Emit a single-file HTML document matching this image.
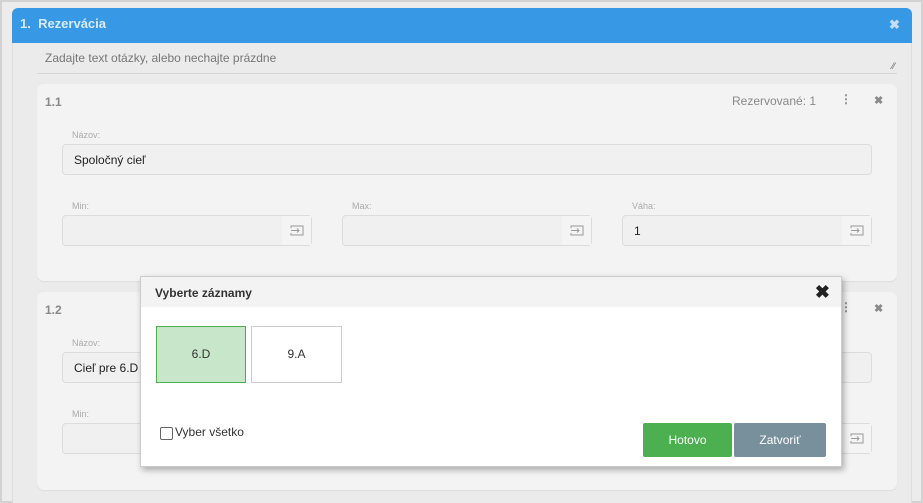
<!DOCTYPE html>
<html><head><meta charset="utf-8"><style>
*{box-sizing:border-box;margin:0;padding:0}
body{width:923px;height:503px;background:#d2d2d2;font-family:"Liberation Sans",sans-serif;position:relative;overflow:hidden}
.frame{position:absolute;left:2px;top:2px;width:919px;height:499px;background:#ececec}
.panel{position:absolute;left:12px;top:8px;width:900px;height:495px;background:#ebebeb;border-left:1px solid #ddd;border-right:1px solid #ddd;border-radius:6px 6px 0 0}
.head{position:absolute;left:12px;top:8px;width:900px;height:35px;background:#3799e6;border-radius:6px 6px 0 0;color:#d8eafb;font-weight:bold;font-size:13px;line-height:32px;padding-left:8px}
.x{position:absolute;font-weight:bold;color:#8a8a8a;font-size:13px}
.ta{position:absolute;left:37px;top:43px;width:860px;height:31px;border-bottom:1px solid #d6d6d6;color:#777;font-size:12px;padding:8px 8px}
.card{position:absolute;left:37px;width:860px;background:#f3f3f3;border-radius:7px;box-shadow:0 1px 1px #ddd}
.num{position:absolute;left:8px;top:11px;color:#888;font-weight:bold;font-size:12px}
.lab{position:absolute;font-size:9px;color:#aaa}
.inp{position:absolute;height:31px;background:#f0f0f0;border:1px solid #dcdcdc;border-radius:4px;font-size:12px;color:#222;padding:8px 11px}
.ib{position:absolute;right:0;top:0;width:29px;height:29px;background:#f4f4f4}
.ib svg{position:absolute;left:8px;top:9px}
.modal{position:absolute;left:140px;top:276px;width:702px;height:191px;background:#fff;border:1px solid #ccc;box-shadow:2px 3px 6px rgba(0,0,0,.3)}
.mh{height:30px;background:#f3f3f3;font-weight:bold;font-size:12px;color:#333;padding:9px 14px}
.it{position:absolute;top:49px;height:57px;font-size:12px;text-align:center;line-height:55px;color:#333}
.btn{position:absolute;top:146px;height:34px;color:#fff;font-size:12px;text-align:center;line-height:34px;border-radius:2px}
</style></head><body>
<div class="frame"></div>
<div class="panel"></div>
<div class="head">1.&nbsp; Rezervácia</div>
<div class="x" style="left:889px;top:17px;color:#c3def6">✖</div>
<div class="ta">Zadajte text otázky, alebo nechajte prázdne<span style="position:absolute;right:2px;top:18px;font-size:9px;color:#666">⁄⁄</span></div>

<div class="card" style="top:84px;height:197px">
<div class="num">1.1</div>
<div style="position:absolute;left:695px;top:10px;font-size:12px;color:#888">Rezervované: 1</div>
<div style="position:absolute;left:803px;top:8px;font-size:12px;color:#888;font-weight:bold">⋮</div>
<div class="x" style="left:837px;top:10px;font-size:11px">✖</div>
<div class="lab" style="left:35px;top:46px">Názov:</div>
<div class="inp" style="left:25px;top:60px;width:810px">Spoločný cieľ</div>
<div class="lab" style="left:35px;top:117px">Min:</div>
<div class="inp" style="left:25px;top:131px;width:250px"><div class="ib"><svg width="14" height="11"><path d="M1 3V1h12v9H1V8M1 5.5h8M7 3.5l2 2-2 2" fill="none" stroke="#999"/></svg></div></div>
<div class="lab" style="left:315px;top:117px">Max:</div>
<div class="inp" style="left:305px;top:131px;width:250px"><div class="ib"><svg width="14" height="11"><path d="M1 3V1h12v9H1V8M1 5.5h8M7 3.5l2 2-2 2" fill="none" stroke="#999"/></svg></div></div>
<div class="lab" style="left:595px;top:117px">Váha:</div>
<div class="inp" style="left:585px;top:131px;width:250px">1<div class="ib"><svg width="14" height="11"><path d="M1 3V1h12v9H1V8M1 5.5h8M7 3.5l2 2-2 2" fill="none" stroke="#999"/></svg></div></div>
</div>

<div class="card" style="top:292px;height:198px">
<div class="num">1.2</div>
<div class="x" style="left:837px;top:10px;font-size:11px">✖</div>
<div style="position:absolute;left:803px;top:8px;font-size:12px;color:#888;font-weight:bold">⋮</div>
<div class="lab" style="left:35px;top:46px">Názov:</div>
<div class="inp" style="left:25px;top:60px;width:810px">Cieľ pre 6.D</div>
<div class="lab" style="left:35px;top:117px">Min:</div>
<div class="inp" style="left:25px;top:131px;width:250px"></div>
<div class="inp" style="left:585px;top:131px;width:250px"><div class="ib"><svg width="14" height="11"><path d="M1 3V1h12v9H1V8M1 5.5h8M7 3.5l2 2-2 2" fill="none" stroke="#999"/></svg></div></div>
</div>

<div class="modal">
<div class="mh">Vyberte záznamy</div>
<div style="position:absolute;right:11px;top:5px;font-size:18px;font-weight:bold;color:#222">✖</div>
<div class="it" style="left:15px;width:90px;background:#c8e6c9;border:1px solid #4caf50">6.D</div>
<div class="it" style="left:110px;width:91px;border:1px solid #ccc">9.A</div>
<div style="position:absolute;left:19px;top:150px;width:13px;height:13px;border:1px solid #666;border-radius:2px"></div>
<div style="position:absolute;left:34px;top:148px;font-size:12px;color:#333">Vyber všetko</div>
<div class="btn" style="left:502px;width:89px;background:#4caf50">Hotovo</div>
<div class="btn" style="left:593px;width:92px;background:#78909c">Zatvoriť</div>
</div>
</body></html>
